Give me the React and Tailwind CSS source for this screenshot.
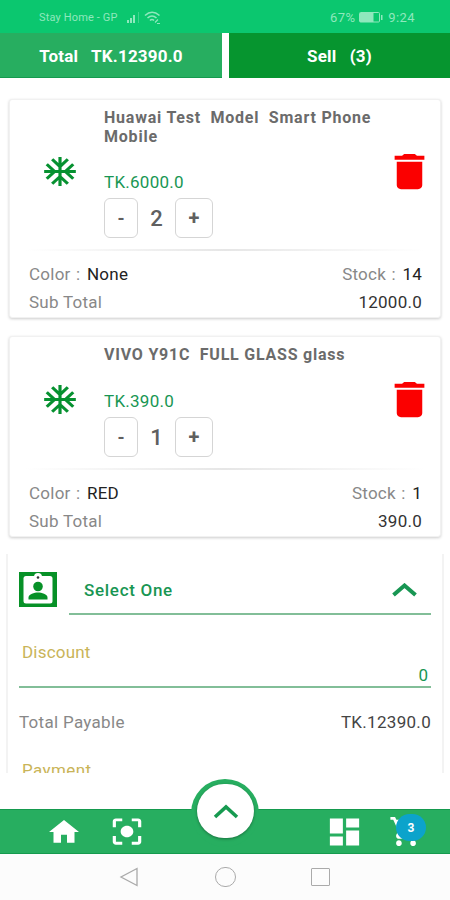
import React, { useState } from "react";
import {
  MdAcUnit,
  MdDelete,
  MdHome,
  MdCenterFocusStrong,
  MdDashboard,
  MdShoppingCart,
} from "react-icons/md";

const cartItems = [
  {
    id: 1,
    name: "Huawai Test  Model  Smart Phone Mobile",
    price: "6000.0",
    qty: 2,
    color: "None",
    stock: 14,
    subTotal: "12000.0",
  },
  {
    id: 2,
    name: "VIVO Y91C  FULL GLASS glass",
    price: "390.0",
    qty: 1,
    color: "RED",
    stock: 1,
    subTotal: "390.0",
  },
];

const StatusBar = () => {
  return (
    <div className="flex h-[33px] shrink-0 items-center justify-between bg-[#0bc76f] pl-[39px] pr-[35px] pt-[2px] text-[#8fe8bd]">
      <div className="flex items-center">
        <span className="w-[79px] whitespace-nowrap pt-[1px] text-[11px] tracking-[0.15px]">Stay Home - GP</span>
        <svg className="ml-[9px] h-[11px] w-[14px]" viewBox="0 0 14 11" fill="currentColor">
          <rect x="0" y="8" width="2" height="3" />
          <rect x="3" y="6" width="2" height="5" />
          <rect x="6" y="3" width="2" height="8" />
          <rect x="11" y="0" width="1" height="11" opacity="0.4" />
        </svg>
        <svg className="ml-[3px] h-[13px] w-[17px]" viewBox="0 0 17 13" fill="none" stroke="currentColor" strokeWidth="1.6">
          <path d="M1 4.5Q8 -2 15.500 4.500" />
          <path d="M3.500 7Q8 3 12.500 7" />
          <path d="M6 9.500Q8 7.500 10 9.500" />
          <path d="M11 11.500l3-3M13 12.500h3" strokeWidth="1.200" />
        </svg>
      </div>
      <div className="flex items-center text-[13px] tracking-[0.4px]">
        <span>67%</span>
        <svg className="ml-[4px] mr-[5px] h-[11px] w-[24px]" viewBox="0 0 24 11">
          <rect x="0.500" y="0.500" width="20" height="9.500" rx="1" fill="none" stroke="currentColor" />
          <rect x="1" y="1" width="13.500" height="9" fill="currentColor" />
          <rect x="22" y="3" width="1.500" height="5" fill="currentColor" />
        </svg>
        <span>9:24</span>
      </div>
    </div>
  );
};

const CartCard = ({ item, compact }) => {
  const [qty, setQty] = useState(item.qty);

  return (
    <div className="rounded-[3px] border border-[#f1f1f1] bg-white shadow-[0_1px_3px_rgba(0,0,0,0.2)]">
      <div className={compact ? "flex h-[131px]" : "flex h-[149px]"}>
        <div className="flex w-[94px] shrink-0 items-center pl-[31px]">
          <MdAcUnit className="mb-[7px] h-[35px] w-[38px] text-[#069130]" preserveAspectRatio="none" />
        </div>
        <div className="flex min-w-0 flex-1 flex-col pt-[8px]">
          <p className="whitespace-pre-wrap text-[16px] font-bold leading-[19px] tracking-[0.78px] text-[#6b6b6b]">
            {item.name}
          </p>
          <p className="mt-auto text-[17px] leading-[20px] tracking-[0.25px] text-[#189653]">TK.{item.price}</p>
          <div className="mb-[11px] mt-[6px] flex items-center text-[#606060]">
            <button
              className="h-[40px] w-[34px] rounded-[6px] border border-[#d5d5d5] text-[18px] font-bold"
              onClick={() => setQty(Math.max(1, qty - 1))}
            >
              -
            </button>
            <span className="w-[37px] text-center text-[22px] font-medium">{qty}</span>
            <button
              className="h-[40px] w-[38px] rounded-[6px] border border-[#d5d5d5] text-[20px] font-bold"
              onClick={() => setQty(qty + 1)}
            >
              +
            </button>
          </div>
        </div>
        <button className="mr-[5px] flex shrink-0 items-center">
          <MdDelete className="mb-[7px] h-[47px] w-[51px] text-[#fb0000]" preserveAspectRatio="none" />
        </button>
      </div>
      <div className="mx-[15px] h-[2px] bg-linear-to-r from-transparent via-[#e6e6e6] to-transparent" />
      <div className="flex h-[66px] flex-col gap-[8px] pl-[19px] pr-[18px] pt-[13px] text-[17px] leading-[20px] tracking-[0.25px] text-[#888]">
        <div className="flex justify-between">
          <p>
            Color <span className="ml-[1px] mr-[2px]">:</span> <span className="text-[#222]">{item.color}</span>
          </p>
          <p>
            Stock <span className="ml-[1px] mr-[2px]">:</span> <span className="text-[#222]">{item.stock}</span>
          </p>
        </div>
        <div className="flex justify-between">
          <p>Sub Total</p>
          <p className="text-[#333]">{item.subTotal}</p>
        </div>
      </div>
    </div>
  );
};

const PaymentPanel = () => {
  return (
    <div className="mx-[6px] mt-[17px] h-[220px] overflow-hidden border-x-2 border-[#f3f3f3] px-[11px] text-[17px] leading-[20px]">
      <div className="flex h-[61px]">
        <svg className="mt-[18px] h-[35px] w-[38px]" viewBox="0 0 38 35">
          <rect width="38" height="35" fill="#079127" />
          <rect x="4.500" y="4" width="29" height="27.500" rx="2.500" fill="#fff" />
          <circle cx="19" cy="5" r="4" fill="#fff" />
          <circle cx="19" cy="5.500" r="1.300" fill="#333" />
          <circle cx="19" cy="14.500" r="4.800" fill="#079127" />
          <path d="M9.500 27.500v-2c0-3.500 6-5 9.500-5s9.500 1.500 9.500 5v2z" fill="#079127" />
        </svg>
        <div className="ml-[12px] flex flex-1 items-center justify-between border-b-2 border-[#82be98] pl-[15px] pr-[14px] pt-[13px] text-[#189653]">
          <span className="font-medium tracking-[0.7px]">Select One</span>
          <svg className="h-[14px] w-[25px]" viewBox="0 0 25 14" fill="none" stroke="currentColor" strokeWidth="4">
            <path d="M1.500 12L12.500 2.500L23.500 12" />
          </svg>
        </div>
      </div>
      <p className="mt-[27px] pl-[3px] tracking-[0.2px] text-[#c9b458]">Discount</p>
      <p className="mt-[3px] h-[23px] border-b-2 border-[#82be98] pr-[3px] text-right text-[#189653]">0</p>
      <div className="mt-[24px] flex justify-between">
        <span className="tracking-[0.3px] text-[#888]">Total Payable</span>
        <span className="tracking-[0.3px] text-[#444]">TK.12390.0</span>
      </div>
      <p className="mt-[28px] pl-[3px] tracking-[0.4px] text-[#c9b458]">Payment</p>
    </div>
  );
};

const BottomBar = () => {
  return (
    <div className="relative flex h-[45px] shrink-0 items-center border-y border-[#159a4e] bg-[#27ae60] text-white">
      <MdHome className="ml-[46px] h-[32px] w-[36px]" preserveAspectRatio="none" />
      <MdCenterFocusStrong className="ml-[26px] h-[35px] w-[38px]" preserveAspectRatio="none" />
      <div className="absolute left-[191px] top-[-31px] h-[68px] w-[68px] rounded-full bg-[#27ae60]" />
      <button className="absolute left-[197px] top-[-26px] flex h-[54px] w-[57px] items-center justify-center rounded-full bg-white shadow-[0_1px_3px_rgba(0,0,0,0.35)]">
        <svg className="h-[15px] w-[26px]" viewBox="0 0 26 15" fill="none" stroke="#179a50" strokeWidth="3.6">
          <path d="M2 13L13 3L24 13" />
        </svg>
      </button>
      <MdDashboard className="ml-auto h-[36px] w-[39px]" preserveAspectRatio="none" />
      <div className="relative ml-[25px] mr-[27px]">
        <MdShoppingCart className="h-[35px] w-[34px]" preserveAspectRatio="none" />
        <span className="absolute left-[7px] top-0 flex h-[27px] w-[30px] items-center justify-center rounded-full bg-[#0ca3cb] text-[12px] font-bold">
          3
        </span>
      </div>
    </div>
  );
};

const App = () => {
  return (
    <div className="flex h-[900px] w-[450px] flex-col overflow-hidden bg-white font-[Roboto,sans-serif]">
      <StatusBar />
      <div className="flex h-[45px] shrink-0 gap-[7px] text-[17px] font-bold tracking-[0.2px] text-white">
        <div className="flex w-[222px] items-center justify-center whitespace-pre border-b border-[#159a4e] bg-[#27ae60] pt-[3px]">
          Total   TK.12390.0
        </div>
        <div className="flex flex-1 items-center justify-center whitespace-pre bg-[#06952f] pt-[2px]">Sell   (3)</div>
      </div>
      <div className="h-[731px] shrink-0 overflow-hidden">
        <div className="flex flex-col gap-[18px] px-[9px] pt-[21px]">
          {cartItems.map((item) => (
            <CartCard key={item.id} item={item} compact={item.name.length < 30} />
          ))}
        </div>
        <div className="h-[236px] overflow-hidden">
          <PaymentPanel />
        </div>
      </div>
      <BottomBar />
      <div className="flex flex-1 items-center bg-[#fcfcfc]">
        <svg className="ml-[119px] h-[20px] w-[20px]" viewBox="0 0 20 20" fill="none" stroke="#aaa" strokeWidth="1.300">
          <path d="M18 1.500V18.500L2 10z" />
        </svg>
        <div className="ml-[76px] h-[20px] w-[21px] rounded-full border border-[#aaa]" />
        <div className="ml-[75px] h-[18px] w-[19px] rounded-[1px] border border-[#aaa]" />
      </div>
    </div>
  );
};

export default App;
